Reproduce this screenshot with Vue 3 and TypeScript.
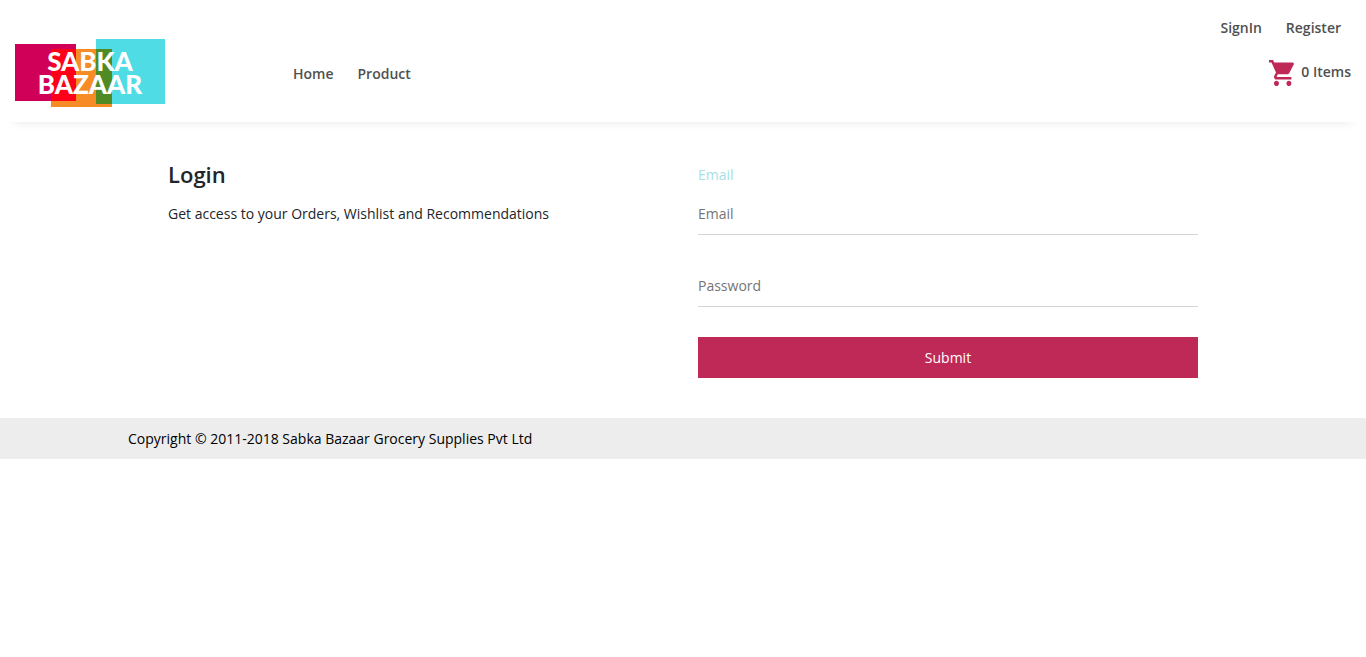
<script setup lang="ts">
import { ref } from 'vue'

interface NavLink {
  label: string
  href: string
}

const mainLinks: NavLink[] = [
  { label: 'Home', href: '#home' },
  { label: 'Product', href: '#product' },
]

const accountLinks: NavLink[] = [
  { label: 'SignIn', href: '#signin' },
  { label: 'Register', href: '#register' },
]

const email = ref('')
const password = ref('')
const itemCount = ref(0)
</script>

<template>
  <div class="page">
    <header class="header">
      <a class="logo" href="#home" aria-label="Sabka Bazaar">
        <svg width="150" height="68" viewBox="0 0 150 68">
          <rect x="0" y="5" width="61" height="57" fill="#d00058" />
          <rect x="36" y="10" width="61" height="58" fill="#f78b25" />
          <rect x="81" y="0" width="69" height="65" fill="#50dce4" />
          <rect x="36" y="10" width="25" height="52" fill="#ff0018" />
          <rect x="81" y="10" width="16" height="55" fill="#508a24" />
          <text x="75" y="32" class="logo-text">SABKA</text>
          <text x="75" y="55" class="logo-text">BAZAAR</text>
        </svg>
      </a>
      <nav class="main-nav" aria-label="Main">
        <a v-for="link in mainLinks" :key="link.label" :href="link.href">{{ link.label }}</a>
      </nav>
      <div class="account">
        <nav class="account-nav" aria-label="Account">
          <a v-for="link in accountLinks" :key="link.label" :href="link.href">{{ link.label }}</a>
        </nav>
        <button class="cart" type="button">
          <svg width="26" height="26" viewBox="1 2 20.9 20" preserveAspectRatio="none" fill="#bf2957" aria-hidden="true">
            <path d="M7 18c-1.1 0-1.99.9-1.99 2S5.9 22 7 22s2-.9 2-2-.9-2-2-2zM1 2v2h2l3.6 7.59-1.35 2.45c-.16.28-.25.61-.25.96 0 1.1.9 2 2 2h12v-2H7.42c-.14 0-.25-.11-.25-.25l.03-.12.9-1.63h7.45c.75 0 1.41-.41 1.75-1.03l3.58-6.49A1 1 0 0 0 20 4H5.21l-.94-2H1zm16 16c-1.1 0-1.99.9-1.99 2s.89 2 1.99 2 2-.9 2-2-.9-2-2-2z" />
          </svg>
          <span>{{ itemCount }} Items</span>
        </button>
      </div>
    </header>

    <main class="login">
      <section class="intro">
        <h1>Login</h1>
        <p>Get access to your Orders, Wishlist and Recommendations</p>
      </section>
      <form class="form" @submit.prevent>
        <div class="field">
          <label for="email">Email</label>
          <input id="email" v-model="email" type="email" placeholder="Email" />
        </div>
        <div class="field">
          <input id="password" v-model="password" type="password" placeholder="Password" aria-label="Password" />
        </div>
        <button class="submit" type="submit">Submit</button>
      </form>
    </main>

    <footer class="footer">
      <p>Copyright © 2011-2018 Sabka Bazaar Grocery Supplies Pvt Ltd</p>
    </footer>
  </div>
</template>

<style>
body {
  margin: 0;
  background: #fff;
}
</style>

<style scoped>
.page {
  font-family: "Open Sans", "Noto Sans", sans-serif;
  font-size: 14px;
  line-height: 21px;
  color: #212529;
}

.page * {
  box-sizing: border-box;
}

a {
  color: #505050;
  text-decoration: none;
  font-weight: 600;
}

.header {
  display: flex;
  align-items: flex-end;
  padding: 17px 15px 15px;
  box-shadow: 0 15px 10px -15px rgba(0, 0, 0, 0.1);
}

.logo {
  display: block;
  width: 150px;
  height: 68px;
}

.logo svg {
  display: block;
}

.logo-text {
  font-family: Lato, sans-serif;
  font-size: 26px;
  font-weight: 900;
  fill: #fff;
  text-anchor: middle;
}

.main-nav {
  display: flex;
  gap: 24px;
  margin: 0 auto 23px 128px;
}

.account {
  display: flex;
  flex-direction: column;
  align-items: flex-end;
  gap: 22px;
  margin-bottom: 21px;
}

.account-nav {
  display: flex;
  gap: 24px;
  padding-right: 10px;
}

.cart {
  display: flex;
  align-items: flex-start;
  gap: 6px;
  padding: 0;
  border: 0;
  background: none;
  color: #505050;
  font: inherit;
  font-weight: 600;
  line-height: 24px;
  cursor: pointer;
}

.login {
  display: grid;
  grid-template-columns: 1fr 1fr;
  gap: 30px;
  max-width: 1110px;
  margin: 0 auto;
  padding: 40px;
}

h1 {
  margin: 0 0 17px;
  font-size: 22px;
  line-height: 24px;
  font-weight: 600;
}

p {
  margin: 0;
}

.form {
  display: flex;
  flex-direction: column;
  gap: 30px;
}

.field {
  display: flex;
  flex-direction: column;
}

label {
  height: 31px;
  padding-top: 2px;
  color: #a5e1e6;
}

input {
  height: 42px;
  padding: 0;
  border: 0;
  border-bottom: 1px solid #d4d4d4;
  border-radius: 0;
  outline: none;
  background: none;
  color: #212529;
  font: inherit;
}

input::placeholder {
  color: #757575;
  opacity: 1;
}

.submit {
  height: 41px;
  padding: 0;
  border: 0;
  background: #bf2957;
  color: #fff;
  font: inherit;
  cursor: pointer;
}

.footer {
  padding: 10px 0;
  background: #ededed;
  color: #000;
}

.footer p {
  max-width: 1110px;
  margin: 0 auto;
}

@media (max-width: 760px) {
  .login {
    grid-template-columns: 1fr;
  }

  .main-nav {
    margin-left: 24px;
  }
}
</style>
